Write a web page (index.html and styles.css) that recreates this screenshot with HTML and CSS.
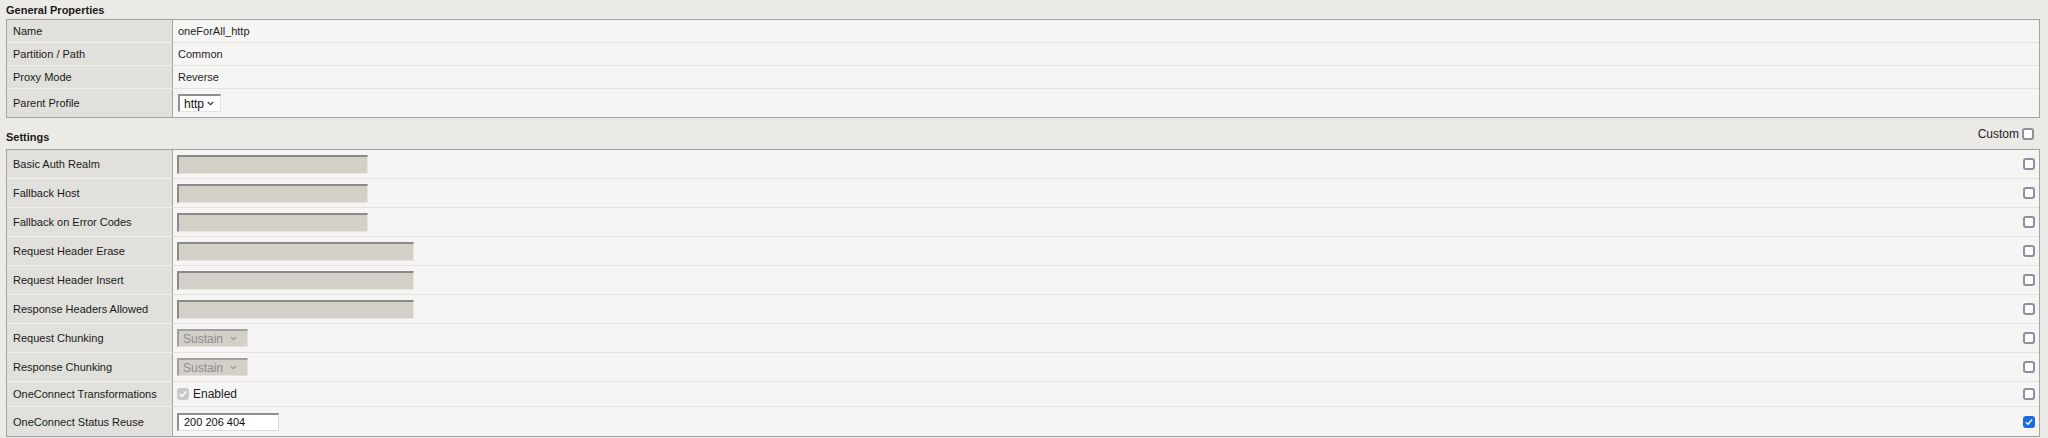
FILE: index.html
```html
<!DOCTYPE html>
<html lang="en">

<head>
  <meta charset="UTF-8">
  <meta name="viewport" content="width=device-width, initial-scale=1.0">
  <title>Profiles : Services : HTTP : oneForAll_http</title>
  <link rel="stylesheet" href="styles.css">
</head>

<body>
  <div class="page">

    <div class="section-head first">
      <h2>General Properties</h2>
    </div>
    <div class="props">
      <div class="row short">
        <div class="label">Name</div>
        <div class="value">oneForAll_http</div>
      </div>
      <div class="row short">
        <div class="label">Partition / Path</div>
        <div class="value">Common</div>
      </div>
      <div class="row short">
        <div class="label">Proxy Mode</div>
        <div class="value">Reverse</div>
      </div>
      <div class="row tall last">
        <div class="label">Parent Profile</div>
        <div class="value">
          <span class="select parent">
            <span>http</span>
            <svg width="7" height="5" viewBox="0 0 7 5"><path d="M0.8 1 L3.5 3.6 L6.2 1" fill="none" stroke="#333" stroke-width="1.2"/></svg>
          </span>
        </div>
      </div>
    </div>

    <div class="section-head">
      <h2>Settings</h2>
      <label class="custom">Custom <span class="cb"></span></label>
    </div>
    <div class="props">
      <div class="row">
        <div class="label">Basic Auth Realm</div>
        <div class="value"><input class="field" type="text" disabled></div>
        <div class="check"><span class="cb"></span></div>
      </div>
      <div class="row">
        <div class="label">Fallback Host</div>
        <div class="value"><input class="field" type="text" disabled></div>
        <div class="check"><span class="cb"></span></div>
      </div>
      <div class="row">
        <div class="label">Fallback on Error Codes</div>
        <div class="value"><input class="field" type="text" disabled></div>
        <div class="check"><span class="cb"></span></div>
      </div>
      <div class="row">
        <div class="label">Request Header Erase</div>
        <div class="value"><input class="field wide" type="text" disabled></div>
        <div class="check"><span class="cb"></span></div>
      </div>
      <div class="row">
        <div class="label">Request Header Insert</div>
        <div class="value"><input class="field wide" type="text" disabled></div>
        <div class="check"><span class="cb"></span></div>
      </div>
      <div class="row">
        <div class="label">Response Headers Allowed</div>
        <div class="value"><input class="field wide" type="text" disabled></div>
        <div class="check"><span class="cb"></span></div>
      </div>
      <div class="row">
        <div class="label">Request Chunking</div>
        <div class="value">
          <span class="select sustain">
            <span>Sustain</span>
            <svg width="7" height="5" viewBox="0 0 7 5"><path d="M0.8 1 L3.5 3.6 L6.2 1" fill="none" stroke="#999" stroke-width="1.2"/></svg>
          </span>
        </div>
        <div class="check"><span class="cb"></span></div>
      </div>
      <div class="row">
        <div class="label">Response Chunking</div>
        <div class="value">
          <span class="select sustain">
            <span>Sustain</span>
            <svg width="7" height="5" viewBox="0 0 7 5"><path d="M0.8 1 L3.5 3.6 L6.2 1" fill="none" stroke="#999" stroke-width="1.2"/></svg>
          </span>
        </div>
        <div class="check"><span class="cb"></span></div>
      </div>
      <div class="row mid">
        <div class="label">OneConnect Transformations</div>
        <div class="value">
          <span class="cb off-on"><svg width="9" height="8" viewBox="0 0 9 8"><path d="M1 4.2 L3.4 6.5 L8 1.2" fill="none" stroke="#fff" stroke-width="1.6"/></svg></span>
          <span class="enabled">Enabled</span>
        </div>
        <div class="check"><span class="cb"></span></div>
      </div>
      <div class="row last">
        <div class="label">OneConnect Status Reuse</div>
        <div class="value"><input class="field status" type="text" value="200 206 404"></div>
        <div class="check"><span class="cb on"><svg width="9" height="8" viewBox="0 0 9 8"><path d="M1 4.2 L3.4 6.5 L8 1.2" fill="none" stroke="#fff" stroke-width="1.6"/></svg></span></div>
      </div>
    </div>

  </div>
</body>

</html>
```

FILE: styles.css
```css
body {
  font-family: "Liberation Sans", Arial, sans-serif;
  font-size: 11px;
  margin: 0;
  padding: 0;
  background-color: #ebeae6;
  color: #1e1e1e;
}

.page {
  padding: 0 8px 0 6px;
}

.section-head {
  display: flex;
  justify-content: space-between;
  align-items: flex-end;
  height: 31px;
}

.section-head.first {
  height: 19px;
}

.section-head h2 {
  margin: 0 0 5px;
  font-size: 11px;
  line-height: 13px;
  font-weight: bold;
  color: #1a1a1a;
}

.section-head.first h2 {
  margin-bottom: 2px;
}

.custom {
  display: flex;
  align-items: center;
  gap: 3px;
  margin: 0 6px 8px 0;
  font-size: 12px;
  color: #222;
}

.props {
  border: 1px solid #a3a3a3;
  background-color: #f6f5f3;
}

.row {
  display: flex;
  height: 29px;
}

.row.short {
  height: 23px;
}

.row.tall {
  height: 28px;
}

.row.mid {
  height: 25px;
}

.label {
  box-sizing: border-box;
  width: 166px;
  flex-shrink: 0;
  padding-left: 6px;
  display: flex;
  align-items: center;
  background-color: #e1e0dc;
  border-right: 1px solid #a5a5a5;
  border-bottom: 1px solid #f1f0ee;
  color: #1a1a1a;
}

.value {
  flex: 1;
  display: flex;
  align-items: center;
  padding-left: 5px;
  border-bottom: 1px solid #e3e2df;
}

.check {
  display: flex;
  align-items: center;
  padding-right: 4px;
  border-bottom: 1px solid #e3e2df;
}

.row.last .label,
.row.last .value,
.row.last .check {
  border-bottom: none;
}

.field {
  box-sizing: border-box;
  width: 191px;
  height: 19px;
  margin: 0 0 0 -1px;
  padding: 0 4px;
  font-family: inherit;
  font-size: 11px;
  color: #111;
  background-color: #d4d0c8;
  border-top: 2px solid #8a8a8a;
  border-left: 2px solid #8a8a8a;
  border-right: 1px solid #e6e5e2;
  border-bottom: 1px solid #e6e5e2;
  border-radius: 0;
  outline: none;
}

.field.wide {
  width: 237px;
}

.field.status {
  width: 102px;
  height: 18px;
  padding-left: 5px;
  background-color: #fff;
  border-top: 2px solid #8f8f8f;
  border-left: 2px solid #8f8f8f;
  border-right: 1px solid #dcdcdc;
  border-bottom: 1px solid #dcdcdc;
}

.select {
  box-sizing: border-box;
  display: inline-flex;
  align-items: center;
  justify-content: space-between;
  height: 18px;
  padding: 0 6px 0 4px;
  border-top: 2px solid #8f8f8f;
  border-left: 2px solid #8f8f8f;
  border-right: 1px solid #e2e2e2;
  border-bottom: 1px solid #e2e2e2;
}

.select.parent {
  width: 43px;
  background-color: #fff;
  color: #111;
  font-size: 12px;
}

.select.sustain {
  width: 71px;
  margin-left: -1px;
  background-color: #d4d0c8;
  color: #8e8e8e;
  font-size: 12px;
  padding-right: 10px;
  border-top-color: #a0a0a0;
  border-left-color: #a0a0a0;
}

.cb {
  box-sizing: border-box;
  display: inline-flex;
  align-items: center;
  justify-content: center;
  width: 12px;
  height: 12px;
  border: 2px solid #8f8f9d;
  border-radius: 3px;
  background-color: #fff;
}

.cb.on {
  background-color: #1a6be0;
  border-color: #1a6be0;
}

.cb.off-on {
  background-color: #c9c9c9;
  border-color: #c9c9c9;
  margin-left: -1px;
}

.enabled {
  margin-left: 4px;
  font-size: 12px;
  color: #1e1e1e;
}
```
